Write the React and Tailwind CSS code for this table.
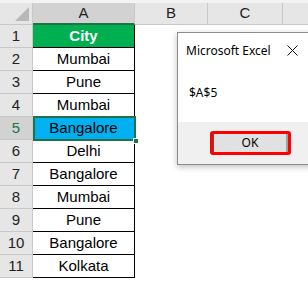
import React from "react";

const cities = [
  "Mumbai",
  "Pune",
  "Mumbai",
  "Bangalore",
  "Delhi",
  "Bangalore",
  "Mumbai",
  "Pune",
  "Bangalore",
  "Kolkata",
];

function RowHead({ n, active }) {
  return (
    <div
      className={`w-[33px] h-[23px] shrink-0 flex items-center justify-center border-r border-b border-[#c8c8c8] text-[15px]
        ${active ? "bg-[#d2d2d2] text-[#217346]" : "bg-[#e6e6e6] text-[#222]"}`}
    >
      {n}
    </div>
  );
}

export default function App() {
  return (
    <div
      className="relative w-[308px] h-[282px] bg-white overflow-hidden"
      style={{ fontFamily: "'Liberation Sans', Arial, sans-serif" }}
    >
      {/* column headers */}
      <div className="flex h-[25px] bg-[#e6e6e6] border-t-[3px] border-[#f3f3f3]">
        <div className="w-[33px] shrink-0 relative border-r border-b border-[#c8c8c8]">
          <div className="absolute right-[3px] bottom-[3px] w-0 h-0 border-l-[14px] border-l-transparent border-b-[14px] border-b-[#b8b8b8]" />
        </div>
        <div className="w-[102px] shrink-0 flex items-center justify-center bg-[#d2d2d2] border-r border-[#c8c8c8] border-b-2 border-b-[#217346] text-[15px] text-[#222]">
          A
        </div>
        <div className="w-[73px] shrink-0 flex items-center justify-center border-r border-b border-[#c8c8c8] text-[15px] text-[#222]">
          B
        </div>
        <div className="w-[75px] shrink-0 flex items-center justify-center border-r border-b border-[#c8c8c8] text-[15px] text-[#222]">
          C
        </div>
        <div className="flex-1 border-b border-[#c8c8c8]" />
      </div>

      {/* row 1 */}
      <div className="flex">
        <RowHead n={1} />
        <div className="w-[102px] h-[23px] shrink-0 flex items-center justify-center bg-[#00b050] text-white font-bold text-[15px] border-r border-b border-black">
          City
        </div>
      </div>

      {cities.map((c, i) => (
        <div key={i} className="flex">
          <RowHead n={i + 2} active={i === 3} />
          <div
            className={`w-[102px] h-[23px] shrink-0 flex items-center justify-center text-[15px] text-black border-r border-b border-black
              ${i === 3 ? "bg-[#00b0f0]" : "bg-white"}`}
          >
            {c}
          </div>
        </div>
      ))}

      {/* selection on A5 */}
      <div className="absolute left-[33px] top-[116px] w-[103px] h-[25px] border-2 border-[#217346] pointer-events-none" />
      <div className="absolute left-[133px] top-[138px] w-[6px] h-[6px] bg-[#217346] border border-white" />

      {/* message box */}
      <div
        className="absolute left-[177px] top-[32px] w-[150px] h-[133px] bg-white border border-[#8c8c8c] shadow-[0_2px_6px_rgba(0,0,0,0.25)] flex flex-col"
        style={{ fontFamily: "'Noto Sans', 'Open Sans', sans-serif" }}
      >
        <div className="flex items-center h-[33px] pl-[8px] pt-[2px]">
          <span className="text-[12px] text-black">Microsoft Excel</span>
          <svg className="ml-[16px]" width="11" height="11" viewBox="0 0 11 11">
            <path d="M0.5 0.5 L10.5 10.5 M10.5 0.5 L0.5 10.5" stroke="#111" strokeWidth="1" />
          </svg>
        </div>
        <div className="h-[56px] pl-[11px] pt-[18px] text-[12px] text-black">$A$5</div>
        <div className="flex-1 bg-[#f0f0f0] pl-[32px] pt-[9px]">
          <div className="w-[81px] h-[24px] rounded-[3px] border-[3px] border-[#ff0000] bg-[#e1e1e1]">
            <div className="h-full border-l border-l-[#555] border-r-2 border-r-[#a0a0a0] flex items-center justify-center text-[12px] text-black">
              OK
            </div>
          </div>
        </div>
      </div>
    </div>
  );
}
